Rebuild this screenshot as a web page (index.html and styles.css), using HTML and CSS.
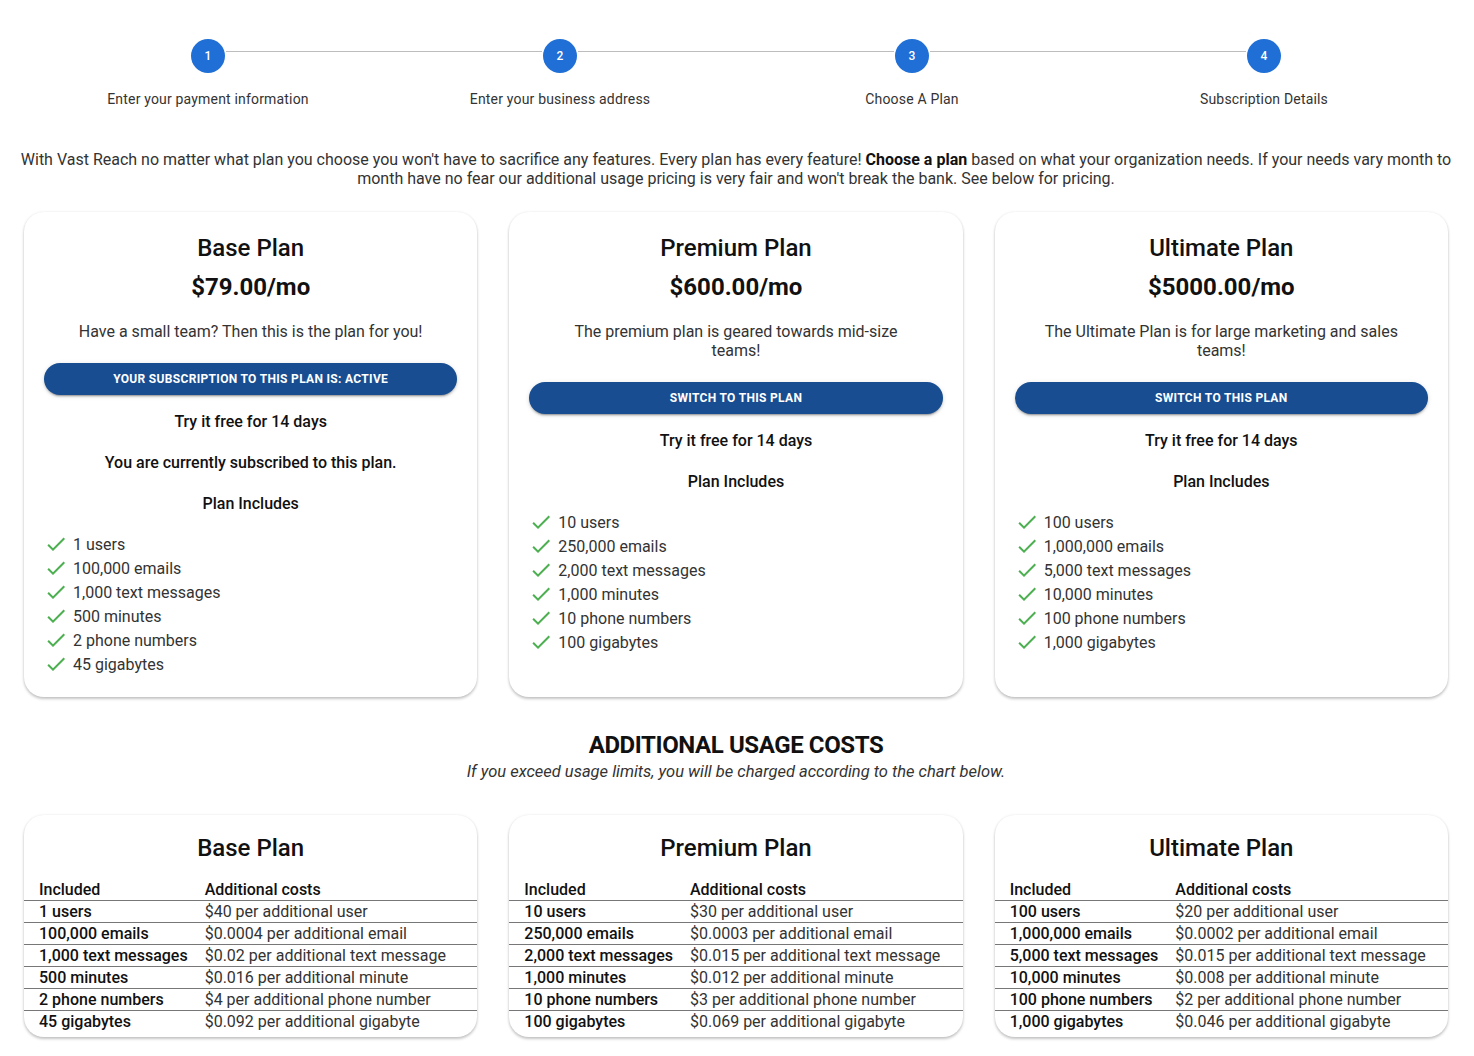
FILE: index.html
```html
<!DOCTYPE html>
<html lang="en">
<head>
    <meta charset="UTF-8">
    <meta name="viewport" content="width=device-width, initial-scale=1.0">
    <title>Choose A Plan</title>
    <link rel="stylesheet" href="styles.css">
</head>
<body>
<div class="page">
    <div class="stepper">
        <div class="step">
            <div class="step-icon">1</div>
            <div class="step-label">Enter your payment information</div>
        </div>
        <div class="step">
            <div class="step-icon">2</div>
            <div class="step-label">Enter your business address</div>
        </div>
        <div class="step">
            <div class="step-icon">3</div>
            <div class="step-label">Choose A Plan</div>
        </div>
        <div class="step">
            <div class="step-icon">4</div>
            <div class="step-label">Subscription Details</div>
        </div>
    </div>

    <p class="intro">With Vast Reach no matter what plan you choose you won't have to sacrifice any features. Every plan has every feature! <b>Choose a plan</b> based on what your organization needs. If your needs vary month to month have no fear our additional usage pricing is very fair and won't break the bank. See below for pricing.</p>

    <div class="plans">
        <div class="card plan">
            <h2 class="plan-title">Base Plan</h2>
            <div class="plan-price">$79.00/mo</div>
            <p class="plan-desc">Have a small team? Then this is the plan for you!</p>
            <button class="plan-btn">Your subscription to this plan is: active</button>
            <p class="plan-note">Try it free for 14 days</p>
            <p class="plan-note">You are currently subscribed to this plan.</p>
            <p class="plan-note">Plan Includes</p>
            <ul class="features">
                <li><svg viewBox="0 0 24 24"><path d="M9 16.17L4.83 12l-1.42 1.41L9 19 21 7l-1.41-1.41z"/></svg>1 users</li>
                <li><svg viewBox="0 0 24 24"><path d="M9 16.17L4.83 12l-1.42 1.41L9 19 21 7l-1.41-1.41z"/></svg>100,000 emails</li>
                <li><svg viewBox="0 0 24 24"><path d="M9 16.17L4.83 12l-1.42 1.41L9 19 21 7l-1.41-1.41z"/></svg>1,000 text messages</li>
                <li><svg viewBox="0 0 24 24"><path d="M9 16.17L4.83 12l-1.42 1.41L9 19 21 7l-1.41-1.41z"/></svg>500 minutes</li>
                <li><svg viewBox="0 0 24 24"><path d="M9 16.17L4.83 12l-1.42 1.41L9 19 21 7l-1.41-1.41z"/></svg>2 phone numbers</li>
                <li><svg viewBox="0 0 24 24"><path d="M9 16.17L4.83 12l-1.42 1.41L9 19 21 7l-1.41-1.41z"/></svg>45 gigabytes</li>
            </ul>
        </div>
        <div class="card plan">
            <h2 class="plan-title">Premium Plan</h2>
            <div class="plan-price">$600.00/mo</div>
            <p class="plan-desc">The premium plan is geared towards mid-size teams!</p>
            <button class="plan-btn">Switch to this plan</button>
            <p class="plan-note">Try it free for 14 days</p>
            <p class="plan-note">Plan Includes</p>
            <ul class="features">
                <li><svg viewBox="0 0 24 24"><path d="M9 16.17L4.83 12l-1.42 1.41L9 19 21 7l-1.41-1.41z"/></svg>10 users</li>
                <li><svg viewBox="0 0 24 24"><path d="M9 16.17L4.83 12l-1.42 1.41L9 19 21 7l-1.41-1.41z"/></svg>250,000 emails</li>
                <li><svg viewBox="0 0 24 24"><path d="M9 16.17L4.83 12l-1.42 1.41L9 19 21 7l-1.41-1.41z"/></svg>2,000 text messages</li>
                <li><svg viewBox="0 0 24 24"><path d="M9 16.17L4.83 12l-1.42 1.41L9 19 21 7l-1.41-1.41z"/></svg>1,000 minutes</li>
                <li><svg viewBox="0 0 24 24"><path d="M9 16.17L4.83 12l-1.42 1.41L9 19 21 7l-1.41-1.41z"/></svg>10 phone numbers</li>
                <li><svg viewBox="0 0 24 24"><path d="M9 16.17L4.83 12l-1.42 1.41L9 19 21 7l-1.41-1.41z"/></svg>100 gigabytes</li>
            </ul>
        </div>
        <div class="card plan">
            <h2 class="plan-title">Ultimate Plan</h2>
            <div class="plan-price">$5000.00/mo</div>
            <p class="plan-desc">The Ultimate Plan is for large marketing and sales teams!</p>
            <button class="plan-btn">Switch to this plan</button>
            <p class="plan-note">Try it free for 14 days</p>
            <p class="plan-note">Plan Includes</p>
            <ul class="features">
                <li><svg viewBox="0 0 24 24"><path d="M9 16.17L4.83 12l-1.42 1.41L9 19 21 7l-1.41-1.41z"/></svg>100 users</li>
                <li><svg viewBox="0 0 24 24"><path d="M9 16.17L4.83 12l-1.42 1.41L9 19 21 7l-1.41-1.41z"/></svg>1,000,000 emails</li>
                <li><svg viewBox="0 0 24 24"><path d="M9 16.17L4.83 12l-1.42 1.41L9 19 21 7l-1.41-1.41z"/></svg>5,000 text messages</li>
                <li><svg viewBox="0 0 24 24"><path d="M9 16.17L4.83 12l-1.42 1.41L9 19 21 7l-1.41-1.41z"/></svg>10,000 minutes</li>
                <li><svg viewBox="0 0 24 24"><path d="M9 16.17L4.83 12l-1.42 1.41L9 19 21 7l-1.41-1.41z"/></svg>100 phone numbers</li>
                <li><svg viewBox="0 0 24 24"><path d="M9 16.17L4.83 12l-1.42 1.41L9 19 21 7l-1.41-1.41z"/></svg>1,000 gigabytes</li>
            </ul>
        </div>
    </div>

    <h2 class="usage-title">ADDITIONAL USAGE COSTS</h2>
    <p class="usage-sub">If you exceed usage limits, you will be charged according to the chart below.</p>

    <div class="plans usage">
        <div class="card cost">
            <h2 class="plan-title">Base Plan</h2>
            <table>
                <thead><tr><th>Included</th><th>Additional costs</th></tr></thead>
                <tbody>
                    <tr><td>1 users</td><td>$40 per additional user</td></tr>
                    <tr><td>100,000 emails</td><td>$0.0004 per additional email</td></tr>
                    <tr><td>1,000 text messages</td><td>$0.02 per additional text message</td></tr>
                    <tr><td>500 minutes</td><td>$0.016 per additional minute</td></tr>
                    <tr><td>2 phone numbers</td><td>$4 per additional phone number</td></tr>
                    <tr><td>45 gigabytes</td><td>$0.092 per additional gigabyte</td></tr>
                </tbody>
            </table>
        </div>
        <div class="card cost">
            <h2 class="plan-title">Premium Plan</h2>
            <table>
                <thead><tr><th>Included</th><th>Additional costs</th></tr></thead>
                <tbody>
                    <tr><td>10 users</td><td>$30 per additional user</td></tr>
                    <tr><td>250,000 emails</td><td>$0.0003 per additional email</td></tr>
                    <tr><td>2,000 text messages</td><td>$0.015 per additional text message</td></tr>
                    <tr><td>1,000 minutes</td><td>$0.012 per additional minute</td></tr>
                    <tr><td>10 phone numbers</td><td>$3 per additional phone number</td></tr>
                    <tr><td>100 gigabytes</td><td>$0.069 per additional gigabyte</td></tr>
                </tbody>
            </table>
        </div>
        <div class="card cost">
            <h2 class="plan-title">Ultimate Plan</h2>
            <table>
                <thead><tr><th>Included</th><th>Additional costs</th></tr></thead>
                <tbody>
                    <tr><td>100 users</td><td>$20 per additional user</td></tr>
                    <tr><td>1,000,000 emails</td><td>$0.0002 per additional email</td></tr>
                    <tr><td>5,000 text messages</td><td>$0.015 per additional text message</td></tr>
                    <tr><td>10,000 minutes</td><td>$0.008 per additional minute</td></tr>
                    <tr><td>100 phone numbers</td><td>$2 per additional phone number</td></tr>
                    <tr><td>1,000 gigabytes</td><td>$0.046 per additional gigabyte</td></tr>
                </tbody>
            </table>
        </div>
    </div>
</div>
</body>
</html>
```

FILE: styles.css
```css
body {
    margin: 0;
    font-family: Roboto, "Liberation Sans", Arial, sans-serif;
    color: #222;
    background: #fff;
}
.page {
    padding: 0 26px 20px 24px;
}

/* stepper */
.stepper {
    display: grid;
    grid-template-columns: repeat(4, 1fr);
    margin: 0 8px;
    padding-top: 39px;
}
.step {
    position: relative;
    display: flex;
    flex-direction: column;
    align-items: center;
}
.step + .step::before {
    content: "";
    position: absolute;
    top: 12px;
    left: calc(-50% + 18px);
    right: calc(50% + 18px);
    border-top: 1px solid #bdbdbd;
}
.step-icon {
    width: 34px;
    height: 34px;
    border-radius: 50%;
    background: #1f6fd6;
    color: #fff;
    font-size: 12px;
    font-weight: 500;
    display: flex;
    align-items: center;
    justify-content: center;
}
.step-label {
    margin-top: 16px;
    font-size: 14px;
    line-height: 20px;
    letter-spacing: 0.18px;
    color: #333;
}

.intro {
    margin: 41px -4px 0;
    text-align: center;
    font-size: 16px;
    line-height: 19px;
    color: #333;
}
.intro b {
    font-weight: 700;
    color: #111;
}

/* plan cards */
.plans {
    display: grid;
    grid-template-columns: repeat(3, 1fr);
    gap: 32px;
    margin-top: 24px;
}
.card {
    background: #fff;
    border-radius: 20px;
    box-shadow: 0 2px 3px rgba(0, 0, 0, 0.22), 0 0 3px rgba(0, 0, 0, 0.08);
}
.plan {
    padding: 20px 20px 21px;
    text-align: center;
}
.plan-title {
    margin: 0;
    font-size: 24px;
    line-height: 32px;
    font-weight: 500;
    color: #111;
}
.plan-price {
    margin-top: 7px;
    font-size: 24px;
    line-height: 32px;
    font-weight: 700;
    color: #111;
}
.plan-desc {
    margin: 19px auto 0;
    max-width: 362px;
    font-size: 16px;
    line-height: 19px;
    color: #333;
}
.plan-btn {
    display: block;
    width: 100%;
    height: 32px;
    margin-top: 22px;
    border: none;
    border-radius: 16px;
    background: #184e91;
    color: #fff;
    font-family: inherit;
    font-size: 12px;
    font-weight: 700;
    letter-spacing: 0.32px;
    text-transform: uppercase;
    box-shadow: 0 3px 1px -2px rgba(0, 0, 0, 0.2), 0 2px 2px rgba(0, 0, 0, 0.14), 0 1px 5px rgba(0, 0, 0, 0.12);
    cursor: pointer;
}
.plan-note {
    margin: 22px 0 0;
    font-size: 16px;
    line-height: 19px;
    font-weight: 500;
    color: #111;
}
.plan-btn + .plan-note {
    margin-top: 17px;
}
.features {
    list-style: none;
    margin: 19px 0 0;
    padding: 0;
    text-align: left;
}
.features li {
    display: flex;
    align-items: center;
    height: 24px;
    font-size: 16px;
    color: #333;
}
.features svg {
    width: 24px;
    height: 24px;
    margin-right: 5px;
    fill: #4caf50;
    flex-shrink: 0;
}

/* additional usage */
.usage-title {
    margin: 34px 0 0;
    text-align: center;
    font-size: 24px;
    line-height: 28px;
    font-weight: 700;
    letter-spacing: -0.4px;
    color: #111;
}
.usage-sub {
    margin: 0;
    text-align: center;
    font-size: 16.5px;
    line-height: 26px;
    font-style: italic;
    color: #333;
}
.usage {
    margin-top: 30px;
}
.cost {
    padding: 17px 0 5px;
    overflow: hidden;
}
.cost .plan-title {
    text-align: center;
}
.cost table {
    width: 100%;
    margin-top: 15px;
    border-collapse: collapse;
    font-size: 16px;
}
.cost th,
.cost td {
    height: 21px;
    padding: 0 15px 0 0;
    text-align: left;
    white-space: nowrap;
}
.cost th:first-child,
.cost td:first-child {
    width: 1%;
    padding: 0 17px 0 15px;
    font-weight: 500;
    color: #111;
}
.cost th {
    font-weight: 500;
    color: #111;
    border-bottom: 1px solid #777;
}
.cost td {
    color: #333;
}
.cost tbody tr + tr td {
    border-top: 1px solid #777;
}
```
